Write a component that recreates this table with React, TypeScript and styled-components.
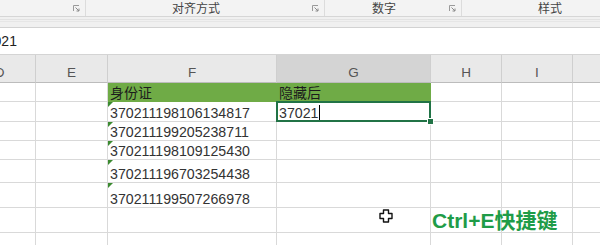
import React from "react";
import styled, { createGlobalStyle } from "styled-components";

const GlobalStyle = createGlobalStyle`
  html, body {
    margin: 0;
    padding: 0;
    background: #fff;
  }
  body {
    width: 600px;
    height: 245px;
    overflow: hidden;
    font-family: "Liberation Sans", "Noto Sans CJK SC", sans-serif;
  }
`;

const Window = styled.div`
  position: relative;
  width: 600px;
  height: 245px;
  overflow: hidden;
  display: flex;
  flex-direction: column;
`;

const Ribbon = styled.div`
  flex: none;
  height: 16px;
  display: flex;
  background: #f3f3f3;
  border-bottom: 1px solid #d6d6d6;
`;

const Group = styled.div<{ $w: number }>`
  flex: 0 0 ${(p) => p.$w}px;
  box-sizing: border-box;
  display: flex;
  align-items: center;
  padding-right: 5px;
  border-right: 1px solid #dcdcdc;
`;

const GroupLabel = styled.span`
  flex: 1;
  margin-right: 6px;
  text-align: center;
  font-family: "Noto Sans CJK SC", sans-serif;
  font-size: 12px;
  line-height: 16px;
  color: #444;
`;

const Launcher = () => (
  <svg width="7" height="7" viewBox="0 0 7 7" style={{ flex: "none" }}>
    <path d="M0.5 6V0.5H6" fill="none" stroke="#9a9a9a" strokeWidth="1" />
    <path d="M2.5 2.5L6 6M6 3.5V6H3.5" fill="none" stroke="#8a8a8a" strokeWidth="1" />
  </svg>
);

const Strip = styled.div`
  flex: none;
  height: 10px;
  background:
    linear-gradient(#e2e2e2, #e2e2e2) 0 2px / 100% 1px no-repeat,
    linear-gradient(#e6e6e6, #e6e6e6) 0 4px / 100% 1px no-repeat,
    #f0f0f0;
  border-bottom: 1px solid #d2d2d2;
`;

const FormulaBar = styled.div`
  flex: none;
  height: 26px;
  display: flex;
  align-items: center;
  background: #fff;
  border-bottom: 1px solid #d4d4d4;
  font-size: 14px;
  color: #222;
  overflow: hidden;
`;

const FormulaText = styled.span`
  margin-left: -22px;
  white-space: nowrap;
`;

const Sheet = styled.div`
  flex: none;
  margin-left: -36px;
  display: grid;
  grid-template-columns: 72px 72px 169px 154px 71px 71px 80px;
  grid-template-rows: 28px 19px 20px 19px 19px 23px 25px 25px 25px;
`;

const HeadCell = styled.div<{ $active?: boolean }>`
  box-sizing: border-box;
  display: flex;
  align-items: flex-end;
  justify-content: center;
  padding-bottom: 1px;
  background: ${(p) => (p.$active ? "#d4d4d4" : "#e9e9e9")};
  border-right: 1px solid #cfcfcf;
  border-bottom: 1px solid #bcbcbc;
  font-size: 13.5px;
  line-height: 16px;
  color: #555;
`;

const Cell = styled.div<{ $fill?: boolean; $mark?: boolean; $selected?: boolean }>`
  position: relative;
  box-sizing: border-box;
  display: flex;
  align-items: flex-end;
  padding: 0 2px;
  min-width: 0;
  white-space: nowrap;
  background: ${(p) => (p.$fill ? "#6fab46" : "#fff")};
  border-right: 1px solid ${(p) => (p.$fill ? "#6fab46" : "#d9d9d9")};
  border-bottom: 1px solid ${(p) => (p.$fill ? "#6fab46" : "#d9d9d9")};
  font-size: 14.2px;
  line-height: 16px;
  color: ${(p) => (p.$fill ? "#1c1c1c" : "#333")};

  ${(p) =>
    p.$mark &&
    `
    &::before {
      content: "";
      position: absolute;
      top: 0;
      left: 0;
      border-top: 5px solid #3b8a30;
      border-right: 5px solid transparent;
    }
  `}

  ${(p) =>
    p.$selected &&
    `
    z-index: 1;
    &::after {
      content: "";
      position: absolute;
      top: -1px;
      left: -1px;
      right: -1px;
      bottom: -1px;
      border: 2px solid #217346;
      pointer-events: none;
    }
    &::before {
      content: "";
      position: absolute;
      right: -4px;
      bottom: -4px;
      width: 5px;
      height: 5px;
      background: #217346;
      border: 1px solid #fff;
      z-index: 2;
    }
  `}
`;

const CjkText = styled.span`
  font-family: "Noto Sans CJK SC", sans-serif;
  font-size: 14px;
  line-height: 18px;
`;

const Caret = styled.span`
  display: inline-block;
  width: 1px;
  height: 15px;
  margin-left: 1px;
  margin-bottom: 1px;
  background: #000;
`;

const CursorMark = styled.svg`
  position: absolute;
  left: 379px;
  top: 209px;
`;

const Hint = styled.div`
  position: absolute;
  left: 432px;
  top: 210px;
  font-family: "Liberation Sans", "Noto Sans CJK SC", sans-serif;
  font-weight: 700;
  font-size: 21px;
  line-height: 21px;
  color: #1f9c48;
  white-space: nowrap;
`;

const columns = ["D", "E", "F", "G", "H", "I", ""];

const ids = [
  "370211198106134817",
  "370211199205238711",
  "370211198109125430",
  "370211196703254438",
  "370211199507266978",
];

const emptyRows = 3;

export default function App() {
  return (
    <Window>
      <GlobalStyle />
      <Ribbon>
        <Group $w={86}>
          <GroupLabel />
          <Launcher />
        </Group>
        <Group $w={239}>
          <GroupLabel>对齐方式</GroupLabel>
          <Launcher />
        </Group>
        <Group $w={137}>
          <GroupLabel>数字</GroupLabel>
          <Launcher />
        </Group>
        <Group $w={188}>
          <GroupLabel>样式</GroupLabel>
        </Group>
      </Ribbon>
      <Strip />
      <FormulaBar>
        <FormulaText>37021</FormulaText>
      </FormulaBar>
      <Sheet>
        {columns.map((c) => (
          <HeadCell key={c || "J"} $active={c === "G"}>
            {c}
          </HeadCell>
        ))}

        <Cell />
        <Cell />
        <Cell $fill>
          <CjkText>身份证</CjkText>
        </Cell>
        <Cell $fill>
          <CjkText>隐藏后</CjkText>
        </Cell>
        <Cell />
        <Cell />
        <Cell />

        {ids.map((id, i) => (
          <React.Fragment key={id}>
            <Cell />
            <Cell />
            <Cell $mark>{id}</Cell>
            {i === 0 ? (
              <Cell $selected>
                37021
                <Caret />
              </Cell>
            ) : (
              <Cell />
            )}
            <Cell />
            <Cell />
            <Cell />
          </React.Fragment>
        ))}

        {Array.from({ length: emptyRows * 7 }).map((_, i) => (
          <Cell key={"e" + i} />
        ))}
      </Sheet>

      <CursorMark width="14" height="14" viewBox="0 0 14 14">
        <path
          d="M4.5 1H9.5V4.5H13V9.5H9.5V13H4.5V9.5H1V4.5H4.5Z"
          fill="#fff"
          stroke="#111"
          strokeWidth="1.4"
          strokeLinejoin="round"
        />
      </CursorMark>
      <Hint>Ctrl+E快捷键</Hint>
    </Window>
  );
}
